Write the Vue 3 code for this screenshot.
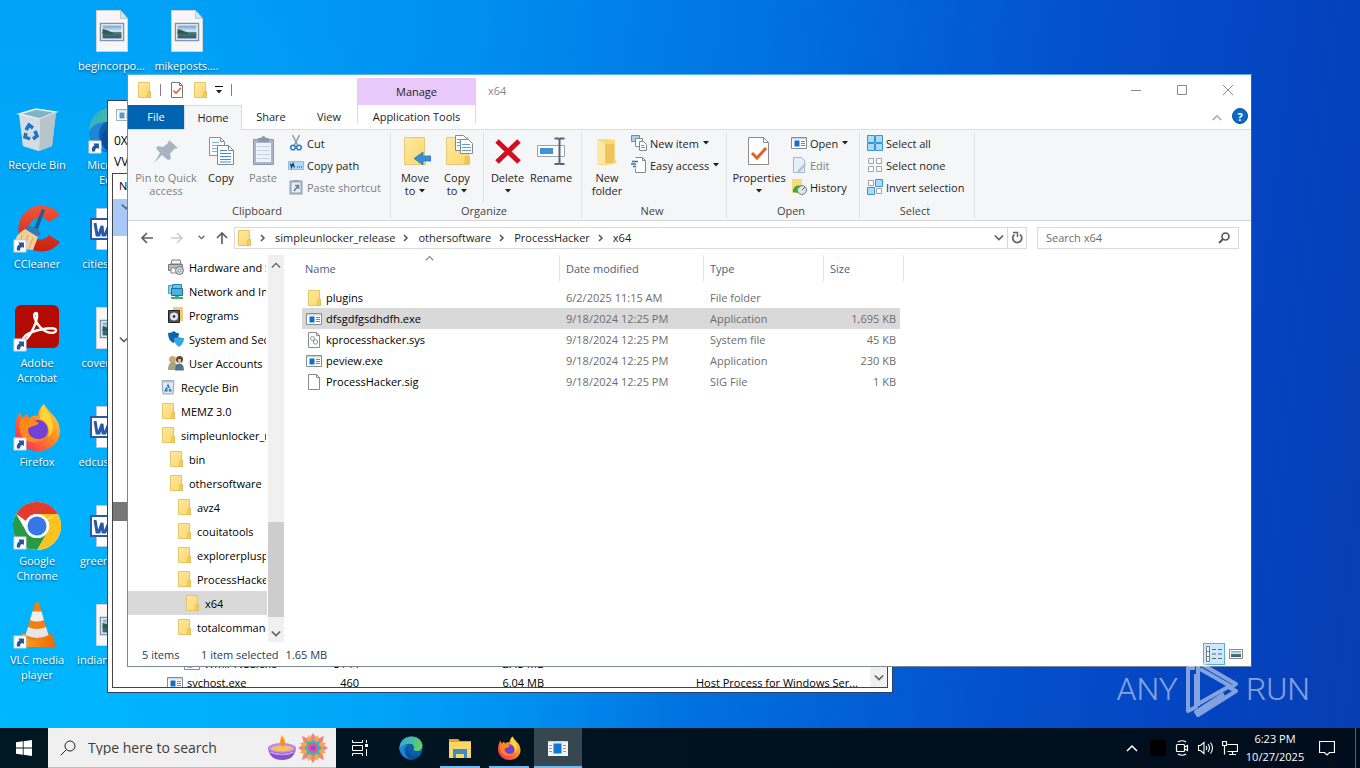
<script setup>
const shortcuts = [
  { label: 'begincorpo...', icon: 'photo', col: 2, row: 1 },
  { label: 'mikeposts....', icon: 'photo', col: 3, row: 1 },
  { label: 'Recycle Bin', icon: 'bin', col: 1, row: 2 },
  { label: 'Microsoft Edge', icon: 'edge', col: 2, row: 2, link: true },
  { label: 'CCleaner', icon: 'ccleaner', col: 1, row: 3, link: true },
  { label: 'citiesred.rtf', icon: 'word', col: 2, row: 3 },
  { label: 'Adobe Acrobat', icon: 'acrobat', col: 1, row: 4, link: true },
  { label: 'coverair.jpg', icon: 'photo', col: 2, row: 4 },
  { label: 'Firefox', icon: 'firefox', col: 1, row: 5, link: true },
  { label: 'edcustom.rtf', icon: 'word', col: 2, row: 5 },
  { label: 'Google Chrome', icon: 'chrome', col: 1, row: 6, link: true },
  { label: 'greenday.rtf', icon: 'word', col: 2, row: 6 },
  { label: 'VLC media player', icon: 'vlc', col: 1, row: 7, link: true },
  { label: 'indianart.png', icon: 'photo', col: 2, row: 7 }
]

const groups = [
  {
    title: 'Clipboard', cls: 'g-clipboard',
    big: [
      { lines: ['Pin to Quick', 'access'], icon: 'pin', cls: 'w76', off: true },
      { lines: ['Copy'], icon: 'copy', cls: 'w34' },
      { lines: ['Paste'], icon: 'paste', cls: 'w50', off: true }
    ],
    small: [
      { label: 'Cut', icon: 'cut' },
      { label: 'Copy path', icon: 'copypath' },
      { label: 'Paste shortcut', icon: 'pasteshort', off: true }
    ]
  },
  {
    title: 'Organize', cls: 'g-organize',
    big: [
      { lines: ['Move', 'to'], icon: 'moveto', cls: 'w40', drop: true },
      { lines: ['Copy', 'to'], icon: 'copyto', cls: 'w44', drop: true },
      { lines: ['Delete', ''], icon: 'delete', cls: 'w44 split', drop: true },
      { lines: ['Rename'], icon: 'rename', cls: 'w44' }
    ],
    small: []
  },
  {
    title: 'New', cls: 'g-new',
    big: [{ lines: ['New', 'folder'], icon: 'newfolder', cls: 'w40' }],
    small: [
      { label: 'New item', icon: 'newitem', drop: true },
      { label: 'Easy access', icon: 'easy', drop: true }
    ]
  },
  {
    title: 'Open', cls: 'g-open',
    big: [{ lines: ['Properties', ''], icon: 'props', cls: 'w56', drop: true }],
    small: [
      { label: 'Open', icon: 'app', drop: true },
      { label: 'Edit', icon: 'edit', off: true },
      { label: 'History', icon: 'history' }
    ]
  },
  {
    title: 'Select', cls: 'g-select',
    big: [],
    small: [
      { label: 'Select all', icon: 'selall' },
      { label: 'Select none', icon: 'selnone' },
      { label: 'Invert selection', icon: 'selinv' }
    ]
  }
]

const crumbs = ['simpleunlocker_release', 'othersoftware', 'ProcessHacker', 'x64']

const tree = [
  { label: 'Hardware and Sound', icon: 'hardware', level: 1 },
  { label: 'Network and Internet', icon: 'network', level: 1 },
  { label: 'Programs', icon: 'programs', level: 1 },
  { label: 'System and Security', icon: 'security', level: 1 },
  { label: 'User Accounts', icon: 'users', level: 1 },
  { label: 'Recycle Bin', icon: 'binsmall', level: 0 },
  { label: 'MEMZ 3.0', icon: 'folder', level: 0 },
  { label: 'simpleunlocker_release', icon: 'folder', level: 0 },
  { label: 'bin', icon: 'folder', level: 1 },
  { label: 'othersoftware', icon: 'folder', level: 1 },
  { label: 'avz4', icon: 'folder', level: 2 },
  { label: 'couitatools', icon: 'folder', level: 2 },
  { label: 'explorerplusplus', icon: 'folder', level: 2 },
  { label: 'ProcessHacker', icon: 'folder', level: 2 },
  { label: 'x64', icon: 'folder', level: 3, on: true },
  { label: 'totalcommander', icon: 'folder', level: 2 }
]

const files = [
  { name: 'plugins', icon: 'folder', date: '6/2/2025 11:15 AM', type: 'File folder', size: '' },
  { name: 'dfsgdfgsdhdfh.exe', icon: 'app', date: '9/18/2024 12:25 PM', type: 'Application', size: '1,695 KB', on: true },
  { name: 'kprocesshacker.sys', icon: 'sys', date: '9/18/2024 12:25 PM', type: 'System file', size: '45 KB' },
  { name: 'peview.exe', icon: 'app', date: '9/18/2024 12:25 PM', type: 'Application', size: '230 KB' },
  { name: 'ProcessHacker.sig', icon: 'page', date: '9/18/2024 12:25 PM', type: 'SIG File', size: '1 KB' }
]

const processes = [
  { name: 'WmiPrvSE.exe', pid: '3144', mem: '2.43 MB', desc: '', deep: true },
  { name: 'svchost.exe', pid: '460', mem: '6.04 MB', desc: 'Host Process for Windows Ser...' }
]
</script>

<template>
  <div class="screen">
    <svg class="sprite" aria-hidden="true">
      <defs>
        <linearGradient id="fold" x1="0" x2="1" y2="1"><stop offset="0" stop-color="#ffe9a0" /><stop offset="1" stop-color="#fbd76c" /></linearGradient>
        <linearGradient id="ffx" x1="1" x2="0" y2="1"><stop offset="0" stop-color="#ffe14a" /><stop offset=".45" stop-color="#ff8a1f" /><stop offset="1" stop-color="#f5156c" /></linearGradient>
        <linearGradient id="edgeg" x2="1" y2=".4"><stop offset="0" stop-color="#2aa5e0" /><stop offset="1" stop-color="#5fd068" /></linearGradient>
        <linearGradient id="scene" x2="0" y2="1"><stop offset="0" stop-color="#6f9fd8" /><stop offset=".45" stop-color="#dcebf0" /><stop offset=".55" stop-color="#4d7867" /><stop offset="1" stop-color="#2b5a86" /></linearGradient>
        <linearGradient id="cone" x2="1"><stop offset="0" stop-color="#ffa528" /><stop offset="1" stop-color="#e96800" /></linearGradient>
        <linearGradient id="ccg" x2="0" y2="1"><stop offset="0" stop-color="#f2553a" /><stop offset="1" stop-color="#c5210f" /></linearGradient>
      </defs>
      <symbol id="i-folder" viewBox="0 0 16 16"><path d="M2.500.500h11v9h1v6h-12z" fill="url(#fold)" stroke="#e8c565" /><path d="M12 9.500h2.500v6H11z" fill="#f3cd62" stroke="#dfb654" stroke-width=".7" /></symbol>
      <symbol id="i-page" viewBox="0 0 16 16"><path d="M2.500.5h8l3 3v12h-11z" fill="#fff" stroke="#8b8b8b" /><path d="M10.500.5v3h3" fill="none" stroke="#8b8b8b" /></symbol>
      <symbol id="i-sys" viewBox="0 0 16 16"><path d="M2.500.5h8l3 3v12h-11z" fill="#fff" stroke="#8b8b8b" /><path d="M10.500.5v3h3" fill="none" stroke="#8b8b8b" /><g fill="none" stroke="#8a949c"><circle cx="6.500" cy="6.500" r="2" /><circle cx="9.500" cy="10" r="2.200" /></g></symbol>
      <symbol id="i-check" viewBox="0 0 16 16"><path d="M2.500.5h8l3 3v12h-11z" fill="#fff" stroke="#777" /><path d="M10.500.5v3h3" fill="none" stroke="#777" /><path d="M4.500 8.500l2.500 2.500 5-5" fill="none" stroke="#e0603c" stroke-width="1.600" /></symbol>
      <symbol id="i-app" viewBox="0 0 16 16"><path d="M.5 2.500h15v11H.5z" fill="#fff" stroke="#848c94" /><path d="M1 3h14v1.500H1z" fill="#cfd6dc" /><path d="M3.500 5.500h5v6h-5z" fill="#0b73c9" /><path d="M10 6.500h4M10 8.500h4M10 10.500h4" stroke="#7a8790" /></symbol>
      <symbol id="i-apptask" viewBox="0 0 24 24"><path d="M2 5h20v15H2z" fill="#f4f4f4" /><path d="M2 5h20v1.500H2z" fill="#d5d5d5" /><path d="M7.500 7.500h8v10h-8z" fill="#0b7bd5" /><path d="M3 9.500h3M3 12.500h3M3 15.500h3M17 9.500h3M17 12.500h3M17 15.500h3" stroke="#9a9a9a" /></symbol>
      <symbol id="i-photo" viewBox="0 0 48 48"><path d="M8.500 3.500h24l7 8v33h-31z" fill="#f7f7f7" stroke="#d2d2d2" /><path d="M32.500 3.500v8h7z" fill="#d3e8f5" stroke="#b9cad4" /><path d="M12.500 16.500h23v17h-23z" fill="#fff" stroke="#8095a8" stroke-width="1.500" /><path d="M14.500 18.500h19v13h-19z" fill="url(#scene)" /><path d="M14.500 22q8 2 12 5h-12z" fill="#2f5d4c" /></symbol>
      <symbol id="i-word" viewBox="0 0 48 48"><path d="M8.500 3.500h31v41h-31z" fill="#fff" stroke="#b7c6dd" /><path d="M3 14h22v20H3z" fill="#fff" stroke="#2859ab" stroke-width="2" /><path d="M7 18l2 12h2l3-9 1 9h2l5-12" fill="none" stroke="#2859ab" stroke-width="3" /></symbol>
      <symbol id="i-bin" viewBox="0 0 48 48"><path d="M6 8l16-5 21 3-4 34-13 5-16-5z" fill="#dce5ea" /><path d="M6 8l17-5 20 3-16 7z" fill="#7fb6c6" stroke="#eef4f6" stroke-width="1.500" /><path d="M27 13l16-7-4 34-13 5z" fill="#b7c4cb" /><path d="M7 9l20 4-1 32-16-5z" fill="#d3dde2" /><g fill="none" stroke="#1a76c8" stroke-width="3.500"><path d="M13 24l3-5 4 3" /><path d="M22 25l2 5-4 3" /><path d="M17 33l-5-2 1-4" /></g></symbol>
      <symbol id="i-binsmall" viewBox="0 0 16 16"><path d="M2 1.500h12l-1 13.500H3z" fill="#e2e9ee" stroke="#93a0aa" /><path d="M2 1.500h12v2H2z" fill="#b6c4ce" /><path d="M5.500 11.500L8 6.500l2.500 5z" fill="none" stroke="#1b80d6" stroke-width="1.800" stroke-dasharray="3.500 1.200" /></symbol>
      <symbol id="i-edge" viewBox="0 0 48 48"><circle cx="24" cy="24" r="23" fill="#0c5fae" /><path d="M1 25C1 8 14 1 25 1c14 0 22 10 22 18 0 7-5 11-11 11-5 0-7-2-7-3s2-3 1-6c-2-5-7-6-12-5C9 17 3 23 1 29z" fill="url(#edgeg)" /><path d="M17 17c-8 5-8 17-1 24 5 5 12 6 17 5-14 3-30-5-32-20 2-5 8-10 16-9z" fill="#1d86d8" /><path d="M19 23c-3 9 5 17 14 17 5 0 8-2 9-2-4 6-10 9-17 9-8-1-13-9-11-17 1-3 3-6 5-7z" fill="#0a4c9c" /></symbol>
      <symbol id="i-ccleaner" viewBox="0 0 48 48"><path d="M47 10A23 23 0 1 0 47 37L36 30a11 11 0 1 1 0-13z" fill="url(#ccg)" /><path d="M29 4l3 1-8 22-4-2z" fill="#1c5f90" /><path d="M14 21q9-1 14 7l-3 4-13-7z" fill="#2b7db4" /><path d="M12 24l13 8-5 13Q9 45 2 38q0-8 10-14z" fill="#f2ce98" /><path d="M9 30l-2 10M15 30l-4 13M20 33l-4 11" stroke="#d8a56a" /></symbol>
      <symbol id="i-acrobat" viewBox="0 0 48 48"><rect x="2" y="1" width="44" height="43" rx="6" fill="#b30b00" /><path d="M23 9c-5 1 1 13 9 18 5 3 12 2 11-1-2-4-24 0-31 6-3 3-3 6 0 4 6-4 13-20 12-26 0-1 0-1-1-1z" fill="none" stroke="#fff" stroke-width="2.400" /></symbol>
      <symbol id="i-firefox" viewBox="0 0 48 48"><path d="M31 1c3 4 4 6 8 10 3 3 8 9 8 17 0 12-10 20-22 20C11 48 2 38 2 26 2 17 5 12 7 9l2 6 5-4 2 4c4-3 7-3 9-2 0-5 3-10 6-12z" fill="url(#ffx)" /><circle cx="25" cy="27" r="10" fill="#7140d8" /><path d="M8 16c6-3 13 1 18 4-3 4-8 2-11 6-1 8 9 13 17 8-5 9-24 7-25-7-1-5 0-8 1-11z" fill="#ff8a1c" /><path d="M31 1c0 7 9 11 9 22 0 5-2 9-5 11 3-8-1-16-8-18 0-6 1-11 4-15z" fill="#ffd53a" /></symbol>
      <symbol id="i-chrome" viewBox="0 0 48 48"><circle cx="24" cy="24" r="24" fill="#fff" /><path d="M3.200 12A24 24 0 0 1 44.800 12H24a12 12 0 0 0-11 7z" fill="#e33b2e" /><path d="M44.800 12A24 24 0 0 1 24 48l10.400-18A12 12 0 0 0 34 17z M44.800 12H24l10 6z" fill="#fcc31e" /><path d="M3.200 12A24 24 0 0 0 24 48l10.400-18a12 12 0 0 1-20.800 0z" fill="#269a45" /><circle cx="24" cy="24" r="12" fill="#fff" /><circle cx="24" cy="24" r="9.500" fill="#3578e5" /></symbol>
      <symbol id="i-vlc" viewBox="0 0 48 48"><path d="M9 33h30l4 13H5z" fill="url(#cone)" /><path d="M22 2q2-2 4 0l10 34q-12 7-24 0z" fill="#f08014" /><path d="M19.500 10.500h9l2.500 8.500q-7 3-14 0z" fill="#eee" /><path d="M15 26q9 4 18 0l2.500 8q-11 6-23 0z" fill="#e6e6e6" /></symbol>
      <symbol id="i-link" viewBox="0 0 16 16"><path d="M1 1h14v14H1z" fill="#fff" stroke="#b9c6d2" /><path d="M4.500 13q-1-5 3-7L6 4h6.500v6.500L11 9q-3 0-3 4z" fill="#24559f" /></symbol>

      <symbol id="i-pin" viewBox="0 0 32 32"><path d="M19 5l9 8-4 1-4 5 1 5-3 1-6-5-8 8 6-10-4-5 2-2 5 1 5-4z" fill="#a9b4c2" /></symbol>
      <symbol id="i-copy" viewBox="0 0 32 32"><g fill="#fff" stroke="#8893a0"><path d="M4.500 2.500h11l4 4v14h-15z" /><path d="M15.500 2.500v4h4" fill="none" /></g><path d="M7 7.500h7M7 10.500h10M7 13.500h6M7 16.500h5" stroke="#7fb2e0" /><g fill="#fff" stroke="#7b8794"><path d="M12.500 10.500h11l5 5v14h-16z" /><path d="M23.500 10.500v5h5" fill="none" /></g><path d="M15 15.500h7M15 18.500h11M15 21.500h11M15 24.500h11M15 27h11" stroke="#3f8fd6" /></symbol>
      <symbol id="i-paste" viewBox="0 0 32 32"><path d="M6.500 4.500h20v25h-20z" fill="#a9b6cc" stroke="#8997b0" /><path d="M9 8h15v19H9z" fill="#eef3fb" /><path d="M10 11.500h13M10 15.500h13M10 19.500h13M10 23.500h13" stroke="#c5d2e6" /><path d="M11 3h3q2.500-4 5 0h3v4H11z" fill="#8d99ad" /></symbol>
      <symbol id="i-cut" viewBox="0 0 16 16"><path d="M4.500 0l5 10M11.500 0l-5 10" stroke="#8b98a5" stroke-width="1.400" /><g fill="none" stroke="#2b80c4" stroke-width="1.600"><circle cx="5" cy="12.500" r="2.300" /><circle cx="11" cy="12.500" r="2.300" /></g></symbol>
      <symbol id="i-copypath" viewBox="0 0 16 16"><path d="M.5 4.500h15v8H.5z" fill="#b4d8f5" stroke="#8bbde6" /><path d="M2.500 6.500l1 4 1.500-4 1.500 4M9 10h1M11 10h1M13 10h1" fill="none" stroke="#153c5e" stroke-width="1.200" /></symbol>
      <symbol id="i-pasteshort" viewBox="0 0 16 16"><path d="M2.500 2.500h11v12h-11z" fill="#e7edf5" stroke="#97a6ba" stroke-width="2" /><path d="M5 1h6v2H5z" fill="#97a6ba" /><path d="M6 12l4-5M7 6.500h3.500V10" fill="none" stroke="#6c7f9a" stroke-width="1.600" /></symbol>
      <symbol id="i-moveto" viewBox="0 0 32 32"><path d="M5.500 2.500h20v21h1v6h-21z" fill="url(#fold)" stroke="#e8c770" /><path d="M32 21v5h-8v4l-9-6.500 9-6.500v4z" fill="#3a8fd2" stroke="#2471ac" stroke-width=".7" /></symbol>
      <symbol id="i-copyto" viewBox="0 0 32 32"><path d="M5.500 2.500h22v19h1v8h-23z" fill="url(#fold)" stroke="#e8c770" /><path d="M24 21h4v8h-5z" fill="#ecc45a" /><g fill="#fff" stroke="#7f8a96"><path d="M14.500.5h8l3 3v12h-11z" /><path d="M19.500 4.500h8l4 4v10h-12z" /></g><path d="M21 9.500h8M21 12.500h9M21 15.500h9M16 4.500h5M16 7.500h3M16 10.500h3" stroke="#5c9fd8" /></symbol>
      <symbol id="i-delete" viewBox="0 0 32 32"><path d="M5 6l22 21M27 6L5 27" stroke="#cf1020" stroke-width="5" /></symbol>
      <symbol id="i-rename" viewBox="0 0 32 32"><path d="M2.500 10.500h27v11h-27z" fill="#fff" stroke="#9aa4ad" /><path d="M5 13h13v6H5z" fill="#3d95d8" /><path d="M19.500 3.500h4l1 1 1-1h4M24.500 4v24M19.500 29h4l1-1 1 1h4" fill="none" stroke="#5c6670" stroke-width="2" /></symbol>
      <symbol id="i-newfolder" viewBox="0 0 32 32"><path d="M6 4h10l8 1v18l2 5-9 2H6z" fill="#f9d978" /><path d="M6 4l8 5v20H6z" fill="#fde8a6" /><path d="M14 9h9v19h-9z" fill="#efc45e" /></symbol>
      <symbol id="i-newitem" viewBox="0 0 16 16"><path d="M.5.500h8v6h-8z" fill="#a8d1f1" stroke="#5d8fb8" /><path d="M4.500 3.500h7v8h-7z" fill="#fff" stroke="#7e8a95" /><path d="M8.500 6.500h4l3 3v6h-7z" fill="#fff" stroke="#7e8a95" /><path d="M10 10.500h3M10 12.500h4" stroke="#5b9bd2" /></symbol>
      <symbol id="i-easy" viewBox="0 0 16 16"><path d="M4.500.500h7l3 3v12h-10v-4" fill="#fff" stroke="#7e8a95" /><path d="M11.500.500v3h3" fill="none" stroke="#7e8a95" /><path d="M1 4.500h6M0 7h5M2 9.500h3" stroke="#2977b8" stroke-width="1.300" /></symbol>
      <symbol id="i-props" viewBox="0 0 32 32"><path d="M5.500 2.500h15l5 5v22h-20z" fill="#fff" stroke="#8d8d8d" /><path d="M20.500 2.500v5h5" fill="none" stroke="#8d8d8d" /><path d="M9 18l5 5 9-10" fill="none" stroke="#e2622a" stroke-width="3" /></symbol>
      <symbol id="i-edit" viewBox="0 0 16 16"><path d="M2.500.500h8l3 3v12h-11z" fill="#e6eef8" stroke="#a3b6cf" /><path d="M14 6l-7 7-1 3 3-1 6-7z" fill="#b2c3d8" /></symbol>
      <symbol id="i-history" viewBox="0 0 16 16"><path d="M1 0h10v14H1z" fill="#f7dc77" /><circle cx="11" cy="11" r="4.500" fill="#dfe5e8" stroke="#747f86" /><path d="M11 11l3-3" fill="none" stroke="#667" /><path d="M2 11q2-6 8-4l-2 2q-3 0-2 3l1 2-5-1z" fill="#3aa63d" /></symbol>
      <symbol id="i-selall" viewBox="0 0 16 16"><g fill="#a6dbfa" stroke="#3a93d2"><path d="M.500.500h7v7h-7zM8.500.500h7v7h-7zM.500 8.500h7v7h-7zM8.500 8.500h7v7h-7z" /></g></symbol>
      <symbol id="i-selnone" viewBox="0 0 16 16"><g fill="#fff" stroke="#a2a2a2"><path d="M1.500 1.500h5v5h-5zM9.500 1.500h5v5h-5zM1.500 9.500h5v5h-5zM9.500 9.500h5v5h-5z" /></g></symbol>
      <symbol id="i-selinv" viewBox="0 0 16 16"><g fill="#fff" stroke="#a2a2a2"><path d="M1.500 1.500h5v5h-5zM9.500 9.500h5v5h-5z" /></g><g fill="#a6dbfa" stroke="#3a93d2"><path d="M8.500.500h7v7h-7zM.500 8.500h7v7h-7z" /></g></symbol>

      <symbol id="i-hardware" viewBox="0 0 16 16"><path d="M4 1h8l1 4H3z" fill="#fff" stroke="#777" /><path d="M.5 5.500h14v6H.5z" fill="#b7bcc0" stroke="#777" /><path d="M3 9h7v5H3z" fill="#f5f5f5" stroke="#888" /><circle cx="11.500" cy="11.500" r="4" fill="#d4dde3" stroke="#6a7378" /><circle cx="11.500" cy="11.500" r="1.500" fill="#fff" stroke="#788" /></symbol>
      <symbol id="i-network" viewBox="0 0 16 16"><path d="M.5 2.500h8v8h-8z" fill="#8ad3f0" stroke="#4aa0c8" /><path d="M4.500 1.500h9v5h-9z" fill="#64c4ec" stroke="#2f80ad" /><path d="M3.500 5.500h11v7h-11z" fill="#45b3e6" stroke="#236f9c" /><path d="M7 13h4v1H7zM3 14h12v2H3z" fill="#45ab6b" /></symbol>
      <symbol id="i-programs" viewBox="0 0 16 16"><path d="M5 0h10v14H5z" fill="#f3c979" /><path d="M.5 3.500h11v12H.5z" fill="#4f565a" stroke="#222" /><circle cx="6" cy="9.500" r="4" fill="#dfe6ea" /><circle cx="6" cy="9.500" r="1.300" fill="#222" /></symbol>
      <symbol id="i-security" viewBox="0 0 16 16"><path d="M0 2q4 0 6-2 3 3 5 2 0 7-6 10Q0 9 0 2z" fill="#0f62ae" /><path d="M6 7q3 0 5-1 2 1 5 1 0 6-5 9-5-3-5-9z" fill="#36a5e6" /></symbol>
      <symbol id="i-users" viewBox="0 0 16 16"><circle cx="4.500" cy="4.500" r="3.500" fill="#caa877" /><path d="M0 15q0-8 5-8t5 8z" fill="#a7a57c" /><circle cx="11.500" cy="4.500" r="3.500" fill="#5e4632" /><path d="M10 4h3v4h-3z" fill="#e0b48c" /><path d="M7 15.500q0-7 4.500-7t4.500 7z" fill="#4f7290" /></symbol>

      <symbol id="i-win" viewBox="0 0 16 16"><path d="M0 2.300L6.800 1.300v6.300H0zM7.600 1.200L16 0v7.600H7.600zM0 8.400h6.800v6.300L0 13.700zM7.600 8.400H16V16l-8.400-1.200z" fill="#fff" /></symbol>
      <symbol id="i-mag" viewBox="0 0 16 16"><g fill="none" stroke="currentColor"><circle cx="10" cy="6" r="5" /><path d="M6.300 9.700L.7 15.300" /></g></symbol>
      <symbol id="i-taskview" viewBox="0 0 18 18"><g fill="none" stroke="#fff"><path d="M1.500 1v2.500h10V1M1.500 17v-2.500h10V17M1.500 6.500h10v5h-10zM15.500 1v3M15.500 10v7" /></g><path d="M14 5h3v3h-3z" fill="#fff" /></symbol>
      <symbol id="i-explorer" viewBox="0 0 24 24"><path d="M1 3h9l2 2h11v4H1z" fill="#e9a12c" /><path d="M1 6h22v16H1z" fill="#fbd566" /><path d="M5 13h14v9h-3v-4H8v4H5z" fill="#3d8cc8" /></symbol>
      <symbol id="i-diya" viewBox="0 0 30 30"><path d="M15 2q6 7 1 12-6-3-1-12z" fill="#ffb02e" /><path d="M1 14h28q-1 13-14 13T1 14z" fill="#8750cc" /><ellipse cx="15" cy="15" rx="14" ry="5" fill="#c388f0" /><ellipse cx="15" cy="15.500" rx="11" ry="3" fill="#f5c05f" /><path d="M15 4q4 5 1 10-4-3-1-10z" fill="#ff8e1d" /><path d="M3 19q12 5 24 0" fill="none" stroke="#c79bee" stroke-width="1.500" /></symbol>
      <symbol id="i-rangoli" viewBox="0 0 32 32"><path d="M16 1l4 6 7-3-2 8 6 4-6 4 2 8-7-3-4 6-4-6-7 3 2-8-6-4 6-4-2-8 7 3z" fill="#f1808c" /><path d="M11 3l5 5 5-5 1 7 7 1-4 5 4 5-7 1-1 7-5-5-5 5-1-7-7-1 4-5-4-5 7-1z" fill="#f7a83a" /><path d="M16 7l3 3 4-1-1 4 3 3-3 3 1 4-4-1-3 3-3-3-4 1 1-4-3-3 3-3-1-4 4 1z" fill="#43b3b9" /><circle cx="16" cy="16" r="5" fill="#ea4fa0" /><circle cx="16" cy="16" r="2.500" fill="#8c4fd0" /></symbol>
      <symbol id="i-up" viewBox="0 0 12 8"><path d="M1 7l5-5 5 5" fill="none" stroke="currentColor" stroke-width="1.500" /></symbol>
      <symbol id="i-down" viewBox="0 0 12 8"><path d="M1 1l5 5 5-5" fill="none" stroke="currentColor" stroke-width="2" /></symbol>
      <symbol id="i-right" viewBox="0 0 6 8"><path d="M1 1l3 3-3 3" fill="none" stroke="currentColor" stroke-width="1.500" /></symbol>
      <symbol id="i-tri" viewBox="0 0 6 4"><path d="M0 0h6L3 3.500z" fill="currentColor" /></symbol>
      <symbol id="i-arrow" viewBox="0 0 14 14"><path d="M13 7H2M7 2L2 7l5 5" fill="none" stroke="currentColor" stroke-width="1.700" /></symbol>
      <symbol id="i-arrowr" viewBox="0 0 14 14"><path d="M1 7h11M7 2l5 5-5 5" fill="none" stroke="currentColor" stroke-width="1.500" /></symbol>
      <symbol id="i-arrowu" viewBox="0 0 14 14"><path d="M7 13V2M2 7l5-5 5 5" fill="none" stroke="currentColor" stroke-width="1.700" /></symbol>
      <symbol id="i-refresh" viewBox="0 0 14 14"><path d="M10 3.500A4.500 4.500 0 1 1 4.500 3.500" fill="none" stroke="currentColor" stroke-width="1.800" /><path d="M3 1.500h4.500V6" fill="none" stroke="currentColor" stroke-width="1.500" /></symbol>
      <symbol id="i-magbold" viewBox="0 0 12 12"><circle cx="7.500" cy="4.500" r="3.500" fill="none" stroke="currentColor" stroke-width="1.600" /><path d="M5 7L1 11" stroke="currentColor" stroke-width="2" /></symbol>
      <symbol id="i-meet" viewBox="0 0 16 16"><g fill="none" stroke="#fff" stroke-width="1.200"><path d="M3.500 4.500h6q1 0 1 1v5q0 1-1 1h-6q-1 0-1-1v-5q0-1 1-1zM10.500 7l3-1.500v5L10.500 9M4 2q4-2.500 8 0M4 14q4 2.500 8 0" /></g></symbol>
      <symbol id="i-vol" viewBox="0 0 16 16"><g fill="none" stroke="#fff" stroke-width="1.100"><path d="M.5 5.500h2l3.500-3v11l-3.500-3h-2zM8 6q1.500 2 0 4M10 4q3 4 0 8M12.500 2.500q4 5.500 0 11" /></g></symbol>
      <symbol id="i-net" viewBox="0 0 16 16"><g fill="none" stroke="#fff" stroke-width="1.200"><path d="M5.500 4.500h10v7h-10M10.500 11.500v3M7 14.500h7M.5 1.500h4v4h-4zM2.500 5.500v9" /></g></symbol>
      <symbol id="i-notif" viewBox="0 0 16 16"><path d="M.5 1.500h15v11h-5L8 15l-2.500-2.500h-5z" fill="none" stroke="#fff" stroke-width="1.200" /></symbol>
      <symbol id="i-details" viewBox="0 0 16 16"><path d="M.5.500h3v15h-3zM.5 5.500h3M.5 10.500h3" fill="#fff" stroke="#777" /><path d="M6 3.500h4M12 3.500h4M6 8h4M12 8h4M6 12.500h4M12 12.500h4" stroke="#666" /></symbol>
      <symbol id="i-thumbs" viewBox="0 0 14 12"><path d="M.5 1.500h13v9H.5z" fill="#fff" stroke="#888" /><path d="M2 3h10v6H2z" fill="url(#scene)" /></symbol>
    </svg>

    <main class="desktop">
      <ul class="shortcuts">
        <li v-for="s in shortcuts" :key="s.label" :class="['c' + s.col, 'r' + s.row]">
          <span class="pic">
            <svg class="s48"><use :href="'#i-' + s.icon" /></svg>
            <svg v-if="s.link" class="badge"><use href="#i-link" /></svg>
          </span>
          <span class="cap">{{ s.label }}</span>
        </li>
      </ul>

      <section class="hacker" aria-label="Process list">
        <div class="htitle"><svg class="s16"><use href="#i-app" /></svg></div>
        <div class="hmenu">0X</div>
        <div class="hmenu">VView</div>
        <div class="hlist">
          <div class="hside">
            <span class="hname">Name</span>
            <div class="hsel"><svg class="chev"><use href="#i-down" /></svg></div>
            <svg class="chev mid"><use href="#i-down" /></svg>
            <div class="hgray"></div>
          </div>
          <div class="hbody">
            <table>
              <tbody>
                <tr v-for="p in processes" :key="p.name">
                  <td class="pn" :class="{ deep: p.deep }"><svg class="s16"><use href="#i-app" /></svg>{{ p.name }}</td>
                  <td class="pp">{{ p.pid }}</td>
                  <td class="pm">{{ p.mem }}</td>
                  <td class="pd">{{ p.desc }}</td>
                </tr>
              </tbody>
            </table>
            <div class="hscroll"><svg class="chev"><use href="#i-down" /></svg></div>
          </div>
        </div>
      </section>

      <section class="explorer" aria-label="x64">
        <header class="titlebar">
          <div class="qat">
            <svg class="s16"><use href="#i-folder" /></svg>
            <i class="bar"></i>
            <button aria-label="Properties"><svg class="s16"><use href="#i-check" /></svg></button>
            <button aria-label="New folder"><svg class="s16"><use href="#i-folder" /></svg></button>
            <button class="more" aria-label="Customize"><svg class="tri"><use href="#i-tri" /></svg></button>
            <i class="bar"></i>
          </div>
          <div class="manage">Manage</div>
          <h1>x64</h1>
          <button class="wb" aria-label="Minimize"><svg viewBox="0 0 12 12"><path d="M1 6.500h10" /></svg></button>
          <button class="wb" aria-label="Maximize"><svg viewBox="0 0 12 12"><path d="M1.500 1.500h9v9h-9z" /></svg></button>
          <button class="wb" aria-label="Close"><svg viewBox="0 0 12 12"><path d="M1 1l10 10M11 1L1 11" /></svg></button>
        </header>
        <nav class="tabs">
          <button class="file">File</button>
          <button class="home">Home</button>
          <button class="tab">Share</button>
          <button class="tab">View</button>
          <button class="apptools">Application Tools</button>
          <span class="grow"></span>
          <button class="collapse" aria-label="Minimize the ribbon"><svg><use href="#i-up" /></svg></button>
          <button class="help" aria-label="Help">?</button>
        </nav>
        <div class="ribbon">
          <div v-for="g in groups" :key="g.title" class="group" :class="g.cls">
            <div class="tools">
              <button v-for="b in g.big" :key="b.icon" class="big" :class="[b.cls, { off: b.off }]">
                <svg class="s32"><use :href="'#i-' + b.icon" /></svg>
                <span v-for="(l, n) in b.lines" :key="n" class="ln">{{ l }}<svg v-if="b.drop && n === b.lines.length - 1" class="tri" :class="{ gapl: l }"><use href="#i-tri" /></svg></span>
              </button>
              <div v-if="g.small.length" class="smalls">
                <button v-for="b in g.small" :key="b.label" :class="{ off: b.off }">
                  <svg class="s16"><use :href="'#i-' + b.icon" /></svg>{{ b.label }}<svg v-if="b.drop" class="tri gapl"><use href="#i-tri" /></svg>
                </button>
              </div>
            </div>
            <div class="gname">{{ g.title }}</div>
          </div>
        </div>
        <div class="nav">
          <div class="arrows">
            <button aria-label="Back"><svg class="s14"><use href="#i-arrow" /></svg></button>
            <button class="dim" aria-label="Forward"><svg class="s14"><use href="#i-arrowr" /></svg></button>
            <button class="narrow" aria-label="Recent"><svg class="mini"><use href="#i-down" /></svg></button>
            <button class="narrow" aria-label="Up"><svg class="s14"><use href="#i-arrowu" /></svg></button>
          </div>
          <div class="address">
            <svg class="s16"><use href="#i-folder" /></svg>
            <template v-for="c in crumbs" :key="c">
              <svg class="sep"><use href="#i-right" /></svg>
              <a href="#">{{ c }}</a>
            </template>
            <span class="grow"></span>
            <button class="hist" aria-label="Previous locations"><svg class="chev"><use href="#i-down" /></svg></button>
            <button class="refresh" aria-label="Refresh"><svg class="s14"><use href="#i-refresh" /></svg></button>
          </div>
          <div class="find">
            <input type="text" placeholder="Search x64" aria-label="Search x64" />
            <svg class="s12"><use href="#i-magbold" /></svg>
          </div>
        </div>
        <div class="content">
          <ul class="tree">
            <li v-for="t in tree" :key="t.label + t.level" :class="['l' + t.level, { on: t.on }]">
              <svg class="s16"><use :href="'#i-' + t.icon" /></svg><span>{{ t.label }}</span>
            </li>
          </ul>
          <div class="scroll">
            <svg class="chev"><use href="#i-up" /></svg>
            <div class="track"><div class="thumb"></div></div>
            <svg class="chev"><use href="#i-down" /></svg>
          </div>
          <div class="files">
            <table>
              <thead>
                <tr>
                  <th class="cn"><div>Name<svg class="sort"><use href="#i-up" /></svg></div></th>
                  <th class="cd"><div>Date modified</div></th>
                  <th class="ct"><div>Type</div></th>
                  <th class="cs"><div>Size</div></th>
                </tr>
              </thead>
              <tbody>
                <tr v-for="f in files" :key="f.name" :class="{ on: f.on }">
                  <td class="fn"><svg class="s16"><use :href="'#i-' + f.icon" /></svg>{{ f.name }}</td>
                  <td>{{ f.date }}</td>
                  <td>{{ f.type }}</td>
                  <td class="num">{{ f.size }}</td>
                </tr>
              </tbody>
            </table>
          </div>
        </div>
        <footer class="status">
          <span class="items">5 items</span>
          <span>1 item selected</span>
          <span>1.65 MB</span>
          <span class="grow"></span>
          <button class="vw on" aria-label="Details"><svg class="s16"><use href="#i-details" /></svg></button>
          <button class="vw" aria-label="Thumbnails"><svg class="th"><use href="#i-thumbs" /></svg></button>
        </footer>
      </section>

      <div class="mark">
        <span>ANY</span>
        <svg viewBox="0 0 56 62"><g fill="none" stroke="#fff" stroke-width="4" stroke-linejoin="round"><path d="M11 10H4v43l8-4V16" /><path d="M14 48V4l38 22-4 3-32-18" /><path d="M14 46l30-17 8 4-38 24-2-3 28-18" /></g></svg>
        <span>RUN</span>
      </div>
    </main>

    <footer class="taskbar">
      <button class="start" aria-label="Start"><svg class="s16"><use href="#i-win" /></svg></button>
      <div class="tsearch">
        <svg class="s16"><use href="#i-mag" /></svg>
        <input type="text" placeholder="Type here to search" aria-label="Type here to search" />
        <svg class="s30"><use href="#i-diya" /></svg>
        <svg class="s32"><use href="#i-rangoli" /></svg>
      </div>
      <button class="tb" aria-label="Task View"><svg class="s18"><use href="#i-taskview" /></svg></button>
      <button class="tb" aria-label="Microsoft Edge"><svg class="s24"><use href="#i-edge" /></svg></button>
      <button class="tb run" aria-label="File Explorer"><svg class="s24"><use href="#i-explorer" /></svg></button>
      <button class="tb run" aria-label="Firefox"><svg class="s24"><use href="#i-firefox" /></svg></button>
      <button class="tb run cur" aria-label="Process list"><svg class="s24"><use href="#i-apptask" /></svg></button>
      <span class="grow"></span>
      <div class="tray">
        <button aria-label="Hidden icons"><svg class="up"><use href="#i-up" /></svg></button>
        <i class="black"></i>
        <button aria-label="Meet now"><svg class="s16"><use href="#i-meet" /></svg></button>
        <button aria-label="Volume"><svg class="s16"><use href="#i-vol" /></svg></button>
        <button aria-label="Network"><svg class="s16"><use href="#i-net" /></svg></button>
      </div>
      <div class="clock"><span>6:23 PM</span><span>10/27/2025</span></div>
      <button class="notif" aria-label="Notifications"><svg class="s16"><use href="#i-notif" /></svg></button>
      <i class="peek"></i>
    </footer>
  </div>
</template>

<style>
html, body { margin: 0; overflow: hidden; }
</style>

<style scoped>
* { box-sizing: border-box; }
.screen { height: 100vh; display: flex; flex-direction: column; overflow: hidden; font: 11px/15px "Open Sans", "Noto Sans", sans-serif; color: #000; }
.sprite { position: absolute; width: 0; height: 0; }
svg { display: block; flex: none; }
button { font: inherit; color: inherit; background: none; border: 0; padding: 0; display: flex; align-items: center; justify-content: center; }
ul { list-style: none; margin: 0; padding: 0; }
table { border-collapse: separate; border-spacing: 0; }
td, th { padding: 0; font-weight: normal; text-align: left; }
input { font: inherit; border: 0; background: none; outline: 0; min-width: 0; padding: 0; flex: 1; }
.s12 { width: 12px; height: 12px; }
.s14 { width: 14px; height: 14px; }
.s16 { width: 16px; height: 16px; }
.s18 { width: 18px; height: 18px; }
.s24 { width: 24px; height: 24px; }
.s30 { width: 30px; height: 30px; }
.s32 { width: 32px; height: 32px; }
.s48 { width: 48px; height: 48px; }
.tri { width: 6px; height: 4px; }
.gapl { margin-left: 4px; }
.chev { width: 10px; height: 8px; color: #606060; }
.grow { flex: 1; }

.desktop { flex: 1; position: relative; min-height: 0; overflow: hidden; background: radial-gradient(ellipse 50% 110% at 0 100%, #00b8ff 0%, #00b4ffaa 45%, #00a8ff00 100%), linear-gradient(97deg, #00a0f6 0%, #00a0f6 12%, #0090f0 32%, #006fe0 55%, #0450cc 75%, #0443c0 90%, #073eb2 100%); }
.shortcuts { display: grid; grid-template-columns: 74px 75px 75px; grid-auto-rows: 99px; padding-top: 7px; color: #fff; }
.shortcuts li { display: flex; flex-direction: column; align-items: center; gap: 3px; text-align: center; text-shadow: 0 1px 2px #0009; min-width: 0; }
.c1 { grid-column: 1; } .c2 { grid-column: 2; } .c3 { grid-column: 3; }
.r1 { grid-row: 1; } .r2 { grid-row: 2; } .r3 { grid-row: 3; } .r4 { grid-row: 4; } .r5 { grid-row: 5; } .r6 { grid-row: 6; } .r7 { grid-row: 7; }
.pic { position: relative; }
.badge { position: absolute; left: 0; bottom: 0; width: 14px; height: 14px; }
.cap { width: 72px; }

.hacker { position: absolute; left: 107px; top: 100px; right: 467px; bottom: 35px; background: #fff; border: 1px solid #2d3f66; padding: 0 4px 4px; display: flex; flex-direction: column; overflow: hidden; }
.htitle { height: 30px; padding: 6px 4px; opacity: .7; }
.hmenu { height: 21px; padding: 2px; font-size: 12px; }
.hlist { flex: 1; min-height: 0; border: 1px solid #444; display: flex; flex-direction: column; justify-content: space-between; }
.hside { width: 16px; display: flex; flex-direction: column; align-items: flex-end; overflow: hidden; }
.hname { height: 25px; padding: 4px 0 0 6px; width: 16px; }
.hsel { height: 37px; width: 16px; background: #a9c8fa; padding: 4px 0 0 8px; }
.mid { margin-top: 100px; }
.hgray { width: 16px; height: 19px; margin-top: 158px; background: #777; }
.hbody { display: flex; height: 33px; overflow: hidden; align-items: flex-start; }
.hbody table { flex: 1; }
.hbody tr { height: 19px; }
.pn { width: 190px; padding-left: 54px; }
.pn.deep { padding-left: 71px; }
.pn svg { float: left; margin-right: 4px; }
.pp { width: 56px; text-align: right; }
.pm { width: 185px; text-align: right; }
.pd { padding-left: 152px; white-space: nowrap; }
.hscroll { width: 17px; height: 33px; background: #f0f0f0; display: flex; align-items: center; justify-content: center; padding-top: 14px; }

.explorer { position: absolute; left: 127px; top: 74px; right: 108px; bottom: 61px; background: #fff; border: 1px solid #7b8792; border-top-color: #58b4e2; border-right-color: #2a5fb8; display: flex; flex-direction: column; color: #1e1e1e; }
.titlebar { display: flex; height: 30px; align-items: center; flex: none; }
.qat { width: 229px; display: flex; align-items: center; padding-left: 8px; gap: 7px; }
.bar { width: 1px; height: 12px; background: #8a7a8a; margin: 0 1px; }
.more { width: 8px; border-top: 1px solid #000; padding-top: 3px; }
.manage { width: 119px; align-self: flex-end; height: 27px; line-height: 28px; background: #e8c9fa; text-align: center; }
h1 { font: inherit; color: #888; margin: 0 auto 0 12px; }
.wb { width: 46px; height: 28px; }
.wb svg { width: 12px; height: 12px; fill: none; stroke: #888; }
.tabs { display: flex; height: 25px; flex: none; border-bottom: 1px solid #dadbdc; }
.tabs > button { flex: none; }
.file { width: 56px; background: #0063b1; color: #fff; padding-bottom: 2px; }
.home { width: 58px; height: 25px; background: #f5f6f7; border: 1px solid #dadbdc; border-bottom: 0; padding-bottom: 2px; }
.tab { width: 58px; padding-bottom: 2px; }
.apptools { width: 119px; border: solid #e4d3ee; border-width: 0 1px; height: 18px; align-self: flex-start; padding-top: 4px; margin-left: -1px; }
.collapse { width: 22px; color: #999; }
.collapse svg { width: 10px; height: 7px; }
.help { width: 16px; height: 16px; border-radius: 8px; background: #0a6ac4; border: 1px solid #07549d; color: #fff; font-weight: bold; margin: 3px 3px 0 4px; }
.ribbon { display: flex; height: 91px; flex: none; background: #f5f6f7; border-bottom: 1px solid #d3d5d7; }
.group { margin: 2px 0; border-right: 1px solid #e0e2e4; display: flex; flex-direction: column; }
.tools { display: flex; flex: 1; }
.g-clipboard { width: 263px; }
.g-organize { width: 191px; }
.g-new { width: 145px; }
.g-open { width: 133px; }
.g-select { width: 115px; }
.g-organize .tools, .g-open .tools { padding-left: 4px; }
.g-new .tools { padding-left: 5px; }
.g-select .tools { padding-left: 7px; }
.big { flex-direction: column; justify-content: flex-start; line-height: 13px; white-space: nowrap; padding-top: 3px; }
.big .s32 { margin-bottom: 4px; }
.ln { display: flex; align-items: center; justify-content: center; min-height: 13px; }
.w34 { width: 34px; } .w40 { width: 40px; } .w44 { width: 44px; } .w50 { width: 50px; } .w56 { width: 56px; } .w76 { width: 76px; }
.split { border-left: 1px solid #e0e2e4; width: 48px; margin-left: 4px; margin-right: -2px; }
.off { color: #7d7f82; }
.smalls { display: flex; flex-direction: column; }
.smalls button { height: 22px; justify-content: flex-start; white-space: nowrap; }
.smalls .s16 { margin-right: 3px; }
.g-new .smalls { padding-left: 4px; }
.g-open .smalls { padding-left: 4px; }
.gname { text-align: center; height: 15px; color: #444; padding-right: 4px; }
.nav { display: flex; align-items: center; height: 33px; flex: none; padding: 0 12px 0 4px; }
.arrows { display: flex; width: 102px; color: #606060; }
.arrows button { width: 30px; height: 22px; }
.arrows .narrow { width: 18px; }
.arrows .narrow + .narrow { width: 24px; }
.arrows .dim { color: #ccc; }
.mini { width: 7px; height: 5px; }
.address { flex: 1; height: 22px; border: 1px solid #d9d9d9; display: flex; align-items: center; padding-left: 1px; }
.address a { color: inherit; text-decoration: none; }
.sep { width: 6px; height: 8px; margin: 0 9px 0 8px; color: #555; }
.hist { width: 16px; }
.refresh { width: 19px; height: 20px; border-left: 1px solid #d9d9d9; color: #666; }
.find { width: 202px; height: 22px; margin-left: 10px; border: 1px solid #d9d9d9; display: flex; align-items: center; padding: 0 8px; color: #555; }
.find input::placeholder { color: #6d6d6d; opacity: 1; }
.content { flex: 1; min-height: 0; display: flex; }
.tree { width: 139px; margin-right: 1px; overflow: hidden; padding-top: 1px; color: #000; }
.tree li { height: 24px; display: flex; align-items: center; gap: 5px; white-space: nowrap; padding-right: 1px; }
.tree span { overflow: hidden; }
.tree .on { background: #d9d9d9; }
.l0 { padding-left: 32px; } .l1 { padding-left: 40px; } .l2 { padding-left: 48px; } .l3 { padding-left: 56px; }
.scroll { width: 16px; background: #f0f0f0; display: flex; flex-direction: column; align-items: center; padding: 6px 0 4px; margin-top: 1px; }
.track { flex: 1; align-self: stretch; display: flex; flex-direction: column; justify-content: flex-end; padding: 8px 0 13px; }
.thumb { height: 28%; background: #cdcdcd; }
.files { flex: 1; padding-left: 18px; overflow: hidden; }
.files table { table-layout: fixed; width: 602px; }
th { height: 33px; vertical-align: top; color: #4c607a; }
th div { height: 27px; margin-top: 1px; padding: 6px 0 0 6px; border-right: 1px solid #e5e5e5; position: relative; }
.cn { width: 258px; } .cd { width: 144px; } .ct { width: 120px; } .cs { width: 80px; }
.cn div { padding-left: 3px; }
.sort { position: absolute; left: 123px; top: 0; width: 9px; height: 6px; color: #888; }
.files td { height: 21px; padding-left: 6px; color: #6d6d6d; }
.files td.fn { color: #000; padding-left: 4px; }
.fn svg { float: left; margin-right: 4px; }
.files td.num { text-align: right; padding-right: 4px; border-right: 4px solid transparent; background-clip: padding-box; }
.files .on td { background-color: #d9d9d9; }
.status { height: 24px; display: flex; align-items: center; padding: 0 5px 0 14px; gap: 7px; color: #1e395b; flex: none; }
.items { width: 52px; }
.vw { width: 20px; height: 22px; }
.vw.on { width: 22px; background: #cce8ff; border: 1px solid #58b0d8; margin-right: -6px; }
.th { width: 14px; height: 12px; }

.mark { position: absolute; right: 50px; bottom: 8px; display: flex; align-items: center; gap: 6px; opacity: .5; color: #fff; font: 300 32px/62px Roboto, "Open Sans", sans-serif; }
.mark svg { width: 56px; height: 62px; }

.taskbar { height: 40px; flex: none; display: flex; background: linear-gradient(90deg, #001823, #000d1c); color: #fff; }
.start { width: 48px; }
.tsearch { width: 288px; background: #f0f0f0; border-bottom: 1px solid #bbb; display: flex; align-items: center; padding: 0 7px 0 12px; color: #222; font-size: 14px; }
.tsearch input { margin-left: 12px; }
.tsearch input::placeholder { color: #3c3c3c; opacity: 1; }
.tb { width: 48px; margin-right: 1px; }
.tb:nth-of-type(2) { margin-right: 3px; }
.run { position: relative; }
.run::after { content: ""; position: absolute; left: 4px; right: 4px; bottom: 0; height: 2px; background: #76b9ed; }
.cur { background: #37474f; }
.cur::after { left: 0; right: 0; }
.tray { display: flex; align-items: center; gap: 8px; margin-right: 8px; }
.up { width: 12px; height: 8px; margin-right: 4px; }
.black { width: 16px; height: 16px; background: #000; }
.clock { width: 58px; display: flex; flex-direction: column; align-items: center; justify-content: center; line-height: 18px; }
.notif { width: 46px; }
.peek { width: 1px; background: #5a6470; margin: 0 4px 0 5px; }
</style>
